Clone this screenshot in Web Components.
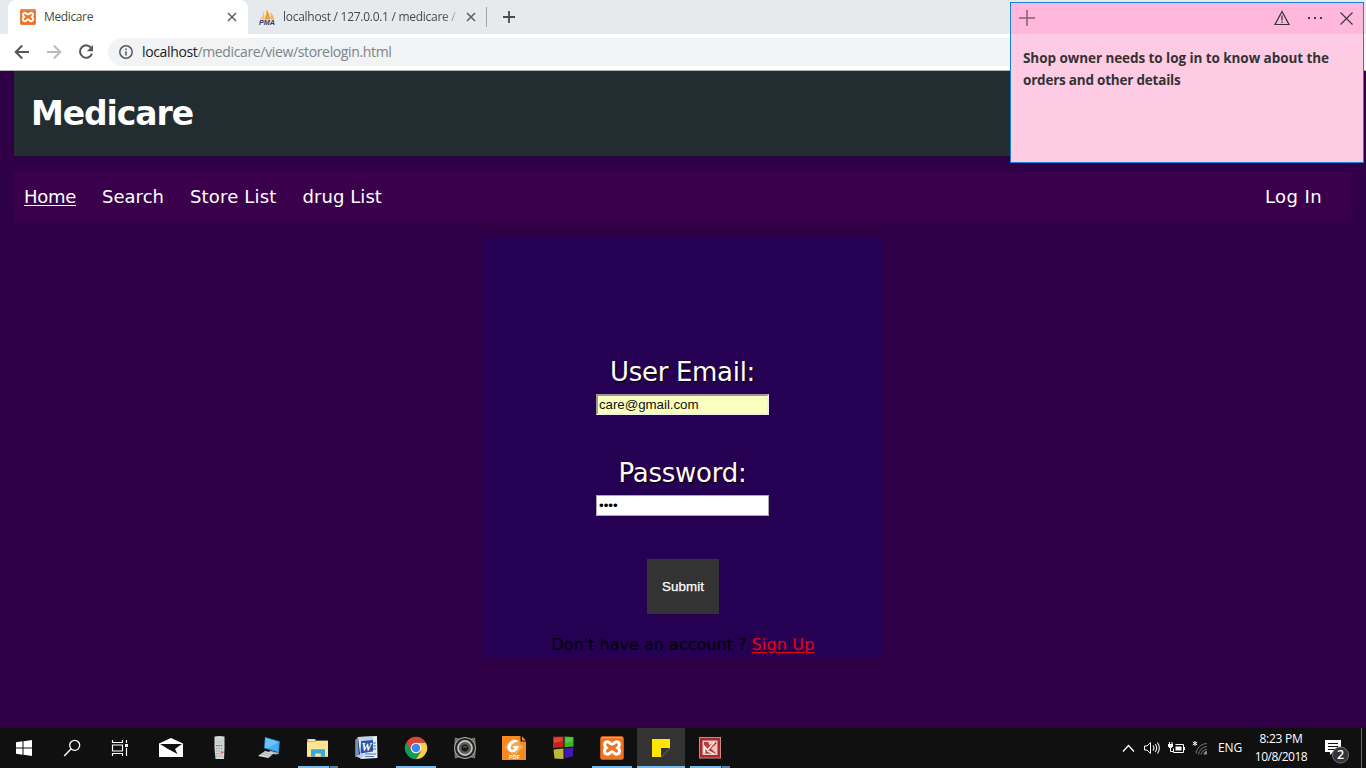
<!DOCTYPE html>
<html lang="en">
<head>
<meta charset="utf-8">
<title>Medicare</title>
<style>
html,body{margin:0;height:100%;overflow:hidden}
body{background:#2f0045;font-family:"Open Sans","Noto Sans",sans-serif}
</style>
</head>
<body>
<desktop-screen></desktop-screen>
<script>
const define=(name,html,setup)=>{
  const t=document.createElement('template');t.innerHTML=html;
  customElements.define(name,class extends HTMLElement{
    connectedCallback(){
      if(this.shadowRoot)return;
      this.attachShadow({mode:'open'}).append(t.content.cloneNode(true));
      if(setup)setup(this,this.shadowRoot);
    }
  });
};

/* A single line whose tracking is adjusted to fill a given width. */
define('fit-text','<style>:host{display:inline-block;white-space:pre;line-height:1.2}</style><slot></slot>',el=>{
  const w=+el.getAttribute('w');
  const n=el.textContent.length;
  const natural=el.getBoundingClientRect().width;
  if(w&&natural){el.style.letterSpacing=((w-natural)/n)+'px';}
});

define('xampp-icon',`<style>:host{display:block}svg{display:block;width:100%;height:100%}</style>
<svg viewBox="0 0 24 24"><rect x=".4" y=".4" width="23.2" height="23.2" rx="2.6" fill="#ee7224" stroke="#d5611c" stroke-width=".8"/><path d="M2 1.6h20" stroke="#f7a877" stroke-width="1"/>
<path d="M9 6.400c-2.500-1.400-4.400 0-4.400 2.100 0 1.600.8 2.500 1.700 3.400-1.400.8-1.900 2-1.900 3.400 0 2.700 3 3.700 4.900 2.200 1-.8 1.200-1.800 2.700-1.800s1.700 1 2.700 1.800c1.900 1.500 4.900.5 4.900-2.200 0-1.400-.5-2.600-1.900-3.400.9-.9 1.700-1.800 1.700-3.400 0-2.100-1.900-3.500-4.400-2.100-1 .6-1.500 1.600-3 1.600s-2-1-3-1.600z" fill="none" stroke="#fff" stroke-width="3"/></svg>`);

define('browser-tabs',`<style>
:host{display:flex;height:34px;background:#e7eaed;font-size:12px;color:#45494d;align-items:stretch}
.tab{box-sizing:border-box;display:flex;align-items:center;height:34px}
.active{margin-left:8px;width:240px;background:#fff;border-radius:8px 8px 0 0;padding-left:12px}
xampp-icon{width:16px;height:16px;margin-right:8px}
.grow{flex:1}
.x{width:10px;height:10px;margin-right:11px}
.second{width:239px;padding-left:11px}
.pma{width:16px;height:16px;margin-right:8px;overflow:visible}
.fade{width:174px;display:flex;-webkit-mask-image:linear-gradient(90deg,#000 92%,transparent 103%)}
.second .x{margin:0 11px 0 9px}
.sep{width:1px;height:20px;background:#a3a7ab;align-self:center;margin-left:-1px}
.plus{width:12px;height:12px;align-self:center;margin-left:16px}
</style>
<div class="tab active"><xampp-icon></xampp-icon><fit-text w="49">Medicare</fit-text><span class="grow"></span><svg class="x" viewBox="0 0 10 10"><path d="M1 1l8 8M9 1L1 9" stroke="#5a5e62" stroke-width="1.500"/></svg></div>
<div class="tab second"><svg class="pma" viewBox="0 0 16 16"><path d="M1 10.500Q4 7 5 1.500L5.500 10.500z" fill="#f3c083"/><path d="M5.500 10.500Q8 5 7.500.5Q11 5 11 10.500z" fill="#f89c2c"/><path d="M11 10.500Q12.500 7 11.500 3Q14.500 6 15.500 10.500z" fill="#f3b165"/><text x="0" y="15.700" font-family="Liberation Sans" font-weight="bold" font-style="italic" font-size="6.500" textLength="16" lengthAdjust="spacingAndGlyphs" fill="#35355c">PMA</text></svg><div class="fade"><fit-text w="172.500">localhost / 127.0.0.1 / medicare /</fit-text></div><svg class="x" viewBox="0 0 10 10"><path d="M1 1l8 8M9 1L1 9" stroke="#5a5e62" stroke-width="1.500"/></svg></div>
<div class="sep"></div>
<svg class="plus" viewBox="0 0 12 12"><path d="M6 0v12M0 6h12" stroke="#474b4f" stroke-width="1.800"/></svg>`);

define('browser-toolbar',`<style>
:host{box-sizing:border-box;display:flex;align-items:center;height:37px;background:#fff;border-bottom:1px solid #b1b3b5;padding-left:14px}
svg{display:block}
.nav{width:16px;height:16px;margin-right:16px}
.bar{flex:1;height:28px;border-radius:14px 0 0 14px;background:#f1f3f4;display:flex;align-items:center;margin-left:-2px;padding-left:11px;font-size:14px;color:#7e8387}
.info{width:14px;height:14px;margin-right:9px}
b{font-weight:400;color:#202124}
</style>
<svg class="nav" viewBox="0 0 16 16"><path d="M15 8H2M8.200 1.500L1.700 8l6.500 6.500" fill="none" stroke="#54585c" stroke-width="2"/></svg>
<svg class="nav" viewBox="0 0 16 16"><path d="M1 8h13M7.800 1.500L14.300 8l-6.500 6.500" fill="none" stroke="#b9bbbd" stroke-width="2"/></svg>
<svg class="nav" viewBox="0 0 16 16"><path d="M13.400 4.200A6.200 6.200 0 1 0 14 9.700" fill="none" stroke="#54585c" stroke-width="2"/><path d="M15 1v6.200H8.800z" fill="#54585c"/></svg>
<div class="bar"><svg class="info" viewBox="0 0 14 14"><circle cx="7" cy="7" r="6.200" fill="none" stroke="#54585c" stroke-width="1.500"/><path d="M7 6.200v4.300M7 3.400v1.500" stroke="#54585c" stroke-width="1.500"/></svg><fit-text w="249.500"><b>localhost</b>/medicare/view/storelogin.html</fit-text></div>`);

define('site-header',`<style>
:host{box-sizing:border-box;display:flex;align-items:center;height:85px;background:#222d31;padding-left:17px}
h1{margin:0;font-size:33px;line-height:40px;color:#fff;font-weight:bold}
</style><h1><fit-text w="162">Medicare</fit-text></h1>`);

define('site-nav',`<style>
:host{box-sizing:border-box;display:flex;align-items:center;height:49px;background:#3b004b;padding:0 30px 0 10px;font-size:18px;color:#fff;gap:26px}
.first fit-text{text-decoration:underline;text-underline-offset:2px;text-decoration-thickness:1px}
a:last-child{margin-left:auto}
</style><a class="first"><fit-text w="52">Home</fit-text></a><a><fit-text w="62">Search</fit-text></a><a><fit-text w="86.500">Store List</fit-text></a><a><fit-text w="79.500">drug List</fit-text></a><a><fit-text w="57">Log In</fit-text></a>`);

define('login-form',`<style>
:host{box-sizing:border-box;display:flex;flex-direction:column;align-items:center;width:402px;height:421px;background:#260052;padding-top:119px}
label{font-size:26px;line-height:32px;height:38px;margin-right:1px;color:#fff;text-shadow:1px 1px 1px #000}
input{box-sizing:border-box;display:block;width:173px;height:21px;margin:0 1px 0 0;padding:1px;font:13.333px "Liberation Sans",sans-serif;color:#111;outline:0;border-radius:0}
.mail{background:#faffbd;border:2px solid;border-color:#9a9a9a #eee #eee #9a9a9a;margin-bottom:42px;letter-spacing:-.05px}
.pass{background:#fff;border:1px solid #a9a9a9;padding:2px;color:#000}
button{margin:43px 0 0;padding:0;border:0;width:72px;height:55px;background:#333;color:#fff;font:13.333px "Liberation Sans",sans-serif;-webkit-text-stroke:.25px #fff}
p{margin:19px 0 0;font-size:16px;line-height:24px;color:#000;display:flex;align-items:center;gap:5px;white-space:nowrap}
p fit-text{display:block;line-height:24px}
p .link{color:#f00010;text-decoration:underline;text-decoration-thickness:1px;text-underline-offset:2px}
</style>
<label><fit-text w="145">User Email:</fit-text></label><input class="mail" value="care@gmail.com">
<label><fit-text w="128">Password:</fit-text></label><input class="pass" type="password" value="care">
<button><fit-text w="42">Submit</fit-text></button>
<p><fit-text w="195">Don't have an account ?</fit-text><a><fit-text class="link" w="63">Sign Up</fit-text></a></p>`);

define('medicare-page',`<style>
:host{display:flex;flex-direction:column;height:657px;background:#2f0045;padding:0 14px;box-sizing:border-box;font-family:"DejaVu Sans",sans-serif;gap:16px}
login-form{align-self:center}
</style><site-header></site-header><site-nav></site-nav><login-form></login-form>`);

define('sticky-note',`<style>
:host{box-sizing:border-box;position:absolute;left:1010px;top:2px;width:354px;height:161px;border:1px solid #1683d8;background:#fecbe5;color:#333;display:flex;flex-direction:column}
header{box-sizing:border-box;height:31px;background:#ffb8dc;display:flex;align-items:center;padding:0 10px 1px 8px}
header svg{display:block}
.plus{margin-right:auto}
div{padding:13px 12px;font-size:13.500px;font-weight:700;line-height:22px;display:flex;flex-direction:column;align-items:flex-start}
fit-text{line-height:22px}
</style>
<header><svg class="plus" width="16" height="16"><path d="M8 0v16M0 8h16" stroke="#806270" stroke-width="1.500"/></svg>
<svg width="16" height="16" style="margin-right:17px"><path d="M8 1.500L15 14.500H1z" fill="none" stroke="#333" stroke-width="1.200"/><path d="M8 5.500v5M8 11.500v1.500" stroke="#333" stroke-width="1.200"/></svg>
<svg width="16" height="16" style="margin-right:17px"><path d="M1 7h2v2H1zM7 7h2v2H7zM13 7h2v2h-2z" fill="#4c3842"/></svg>
<svg width="13" height="13"><path d="M.5.500l12 12M12.500.5l-12 12" stroke="#3a3337" stroke-width="1.100"/></svg></header>
<div><fit-text w="306">Shop owner needs to log in to know about the</fit-text><fit-text w="157.500">orders and other details</fit-text></div>`);

define('task-button',`<style>
:host{display:grid;place-items:center;width:48px;height:40px;position:relative}
:host([active]){background:#333}
::slotted(svg),::slotted(xampp-icon){display:block;width:24px;height:24px}
i{display:none;position:absolute;left:4px;right:4px;bottom:0;height:2px;background:#76b9ed}
:host([open]) i{display:block}
:host([active]) i{left:0;right:0}
:host([many]) i{background:linear-gradient(90deg,#76b9ed 31px,#263745 31px 32px,#5482a5 32px)}
</style><slot></slot><i></i>`);

define('system-tray',`<style>
:host{display:flex;height:40px;align-items:center;color:#fff;font-size:12px}
svg{display:block}
.clock{width:78px;display:flex;flex-direction:column;align-items:center;line-height:18px;margin-right:0}
.clock fit-text{line-height:18px}
.edge{width:1px;height:40px;background:#666;margin-right:4px}
</style>
<svg width="96" height="24"><path d="M4 15.500l5.500-6 5.500 6" fill="none" stroke="#fff" stroke-width="1.300"/>
<path d="M25.500 10h2.500l3.500-3.500v11l-3.500-3.500h-2.500z" fill="none" stroke="#fff"/><path d="M34 9.500q2 2.500 0 5M36.200 8q3 4 0 8M38.400 6.500q4 5.500 0 11" fill="none" stroke="#eee" stroke-width="1.100"/>
<path d="M56.500 8.500h8v8h-10v-4" fill="none" stroke="#fff"/><path d="M56.500 10.500h6v4h-6zM65 11h1v3h-1zM49 8h5v2.500l-1.500 1.500h-2L49 10.500zM50 6h1v2h-1zM52.500 6h1v2h-1z" fill="#fff"/><path d="M51.500 12v3.500h3" stroke="#fff" fill="none"/>
<path d="M76 5v5M73.800 6.200l4.400 2.600M78.200 6.200l-4.400 2.600" stroke="#fff"/>
<path d="M77 17.500A11 11 0 0 1 88 7.500M79.500 18.500A9 9 0 0 1 88 10.500M82 18.500A6.500 6.500 0 0 1 88 13.500" fill="none" stroke="#777"/><path d="M84.500 18.500a4 4 0 0 1 3.500-3.500v3.500z" fill="#888"/></svg>
<fit-text w="24" style="margin-left:3px">ENG</fit-text>
<div class="clock"><fit-text w="43">8:23 PM</fit-text><fit-text w="52.500">10/8/2018</fit-text></div>
<svg width="41" height="40" font-family="Open Sans"><path d="M5 12h16v12h-8l-3 3v-3H5z" fill="#fff"/><path d="M8 15.500h10M8 18.500h10M8 21.500h7" stroke="#111"/><circle cx="20.500" cy="27" r="8" fill="#343434" stroke="#727272"/><text x="20.500" y="31.400" font-size="12.500" font-weight="600" text-anchor="middle" fill="#fff">2</text></svg>
<span class="edge"></span>`);

define('task-bar',`<style>
:host{display:flex;height:40px;background:#101010}
.apps{display:flex;gap:1px;margin-left:3px}
system-tray{margin-left:auto}
</style>
<task-button><svg viewBox="0 0 24 24"><path d="M4 6.200l6.500-.9v6.200H4zM11.500 5.200L20 4v7.500h-8.500zM4 12.500h6.500v6.200L4 17.800zM11.500 12.500H20V20l-8.500-1.200z" fill="#fff"/></svg></task-button>
<task-button><svg viewBox="0 0 24 24"><circle cx="14.700" cy="9.300" r="5" fill="none" stroke="#fff" stroke-width="1.300"/><path d="M11.200 12.800L4.200 20" stroke="#fff" stroke-width="1.400"/></svg></task-button>
<task-button><svg viewBox="0 0 24 24"><path d="M4.500 4v2.500h10V4M4.500 20v-2.500h10V20M4.500 9h10v6h-10zM18.500 4v3M18.500 12v8" fill="none" stroke="#fff" stroke-width="1.150"/><path d="M17 8h3v3h-3z" fill="#fff"/></svg></task-button>
<div class="apps">
<task-button><svg viewBox="0 0 24 24"><path d="M0 7.500L12 2l12 5.500V21H0z" fill="#fff"/><path d="M1 8h22l-7 5 2.500 5L9 13z" fill="#101010"/></svg></task-button>
<task-button><svg viewBox="0 0 24 24"><path d="M6.500 .5q5-1 10 0v12L16 23H7.500L6.500 12z" fill="#d5d7d5"/><path d="M7.500 3.500h8v4.500h-8z" fill="#c2d6c5"/><path d="M8 9.700h7" stroke="#696e86" stroke-width="1.300" stroke-dasharray="1.500 .8"/><path d="M8 12.500h7M8 15h7M8 17.500h7M8 20h7" stroke="#9a9ea6" stroke-width="1.100" stroke-dasharray="1.500 .9"/><path d="M13 15.500h2.500v1.500H13z" fill="#d66b4c"/></svg></task-button>
<task-button><svg viewBox="0 0 24 24"><path d="M8 1l14.800 4.300-.8 11.500L7 12.300z" fill="#2f91df"/><path d="M8.500 2l13 4-.5 9.500L8 11.500z" fill="#4baef2"/><path d="M8.500 2l13 4-11 6.300-2.500-.8z" fill="#6dc2f8"/><path d="M13 14.500l5 1.500 3 .5 1 1.500-4 .5-6-2z" fill="#a5b2ba"/><path d="M8 15l9 2-5.500 5L1 20z" fill="#d9dee0"/><path d="M6 16.500l9 2M4 18l9 2.300" stroke="#8c979d" stroke-width=".7"/></svg></task-button>
<task-button open many><svg viewBox="0 0 24 24"><path d="M1.200 3h8l1 1.800h11.500V20.500H1.200z" fill="#ddb353"/><path d="M2.500 3.500h6v1.200h-6z" fill="#fff"/><path d="M1 6h8l1.500-1.200H22V20.700H1z" fill="#ffe492"/><path d="M5 20.800v-7.500h14v7.500h-4.200v-3.300H9.200v3.300z" fill="#38a9dc"/></svg></task-button>
<task-button><svg viewBox="0 0 24 24"><path d="M3 1l19-1 .5 22-17 1z" fill="#e6edf6"/><path d="M18 7h3M18 10h3M18 13h3M10 18h11M10 20.500h9" stroke="#4b76b8" stroke-width="1.200"/><path d="M3 1L.2 4v17L4 20z" fill="#7392c3"/><path d="M3 1l15-.5V4L6 5z" fill="#c0d0ea"/><path d="M6 5l12-1v11.500L5.500 17.500z" fill="#2858a5"/><path d="M1 20.500l5-3 4 1-4 4z" fill="#b8cae7"/><text x="6.300" y="14.800" font-family="Liberation Serif" font-weight="bold" font-style="italic" font-size="12.500" textLength="10.500" lengthAdjust="spacingAndGlyphs" fill="#fff">W</text></svg></task-button>
<task-button open><svg viewBox="0 0 24 24"><path d="M12 12L2.300 6.400A11.200 11.200 0 0 0 12 23.200l5-8z" fill="#0f9d58"/><path d="M12 12V6.400h9.700A11.200 11.200 0 0 1 12 23.200l5-8z" fill="#ffcd40"/><path d="M2.300 6.400A11.200 11.200 0 0 1 21.700 6.400H12L7 14.500z" fill="#db4437"/><circle cx="12" cy="12" r="5.300" fill="#fff"/><circle cx="12" cy="12" r="4.300" fill="#4285f4"/></svg></task-button>
<task-button><svg viewBox="0 0 24 24"><path d="M2 1.500l4 1h12l4-1 .5 4.500v12l-.5 4.500-4-1H6l-4 1L1.500 18V6z" fill="#777"/><circle cx="12" cy="12" r="10.500" fill="#242424" stroke="#b5b5b5"/><circle cx="12" cy="12" r="7" fill="#55534f" stroke="#c4c2bb" stroke-width="1.800"/><circle cx="12" cy="12" r="4.200" fill="#181818" stroke="#77726c"/><path d="M10 11.300q2-1.500 4 0" fill="none" stroke="#777"/></svg></task-button>
<task-button><svg viewBox="0 0 24 24"><path d="M0 0h18.500v5.500H24V24H0z" fill="#f58a20"/><path d="M20 .3L24 4.500h-4z" fill="#f58a20"/><path d="M12 1.500l9.500 9.500-9.500 9.500L2.500 11z" fill="#f8a654"/><path d="M17.500 5.200C12 2.300 6 5.500 5.500 11c-.3 4.300 4 6.600 8 4.300 2.300-1.300 3-3.300 3.300-5.300h-5l-1.200 1.800h2.200c-.8 2.300-4 3-4 .2C8.500 8.500 12 5.800 17.500 5.200z" fill="#fff"/><text x="7" y="22.700" font-family="Liberation Sans" font-weight="bold" font-size="5.500" textLength="11" lengthAdjust="spacingAndGlyphs" fill="#fff">PDF</text></svg></task-button>
<task-button><svg viewBox="0 0 24 24"><path d="M2 .8l10.500-.3v10.800L2 12z" fill="#c5221c"/><path d="M13.500.6L22.500 1v9.500l-9 .8z" fill="#3ab526"/><path d="M2.500 13.500l10-1v10.500l-9-.5z" fill="#bcb832"/><path d="M13.500 12.400l9-1-.8 9-8.200 1.900z" fill="#4516b6"/><path d="M3 1.500l8.500-.2v4L3 7z" fill="#dc463e"/><path d="M14.500 1.600l7 .2V5l-7 2z" fill="#58c944"/></svg></task-button>
<task-button open><xampp-icon></xampp-icon></task-button>
<task-button open active><svg viewBox="0 0 24 24"><path d="M3 3h18v9.500L12.500 21H3z" fill="#ffe600"/><path d="M12 12h9.200L12 21.200z" fill="#333"/></svg></task-button>
<task-button open many><svg viewBox="0 0 24 24"><rect x="1.500" y="1.500" width="21" height="20.500" fill="#a8282c" stroke="#cf8583"/><path d="M4.500 4.500h15v14.500h-15z" fill="#e9c9c6"/><path d="M6 6h4l1.500 3L18 5.500l.5 2L13 12.500l5 5H6z" fill="#bf3a3c"/><path d="M6.500 17.500v-7l3 3.500 7.500-8.500M9 14.500l7 3.500" fill="none" stroke="#fff1eb" stroke-width="1.500"/></svg></task-button>
</div>
<system-tray></system-tray>`);

define('desktop-screen',`<style>
:host{display:flex;flex-direction:column;width:1366px;height:768px;position:relative;overflow:hidden}
</style><browser-tabs></browser-tabs><browser-toolbar></browser-toolbar><medicare-page></medicare-page><task-bar></task-bar><sticky-note></sticky-note>`);
</script>
</body>
</html>
